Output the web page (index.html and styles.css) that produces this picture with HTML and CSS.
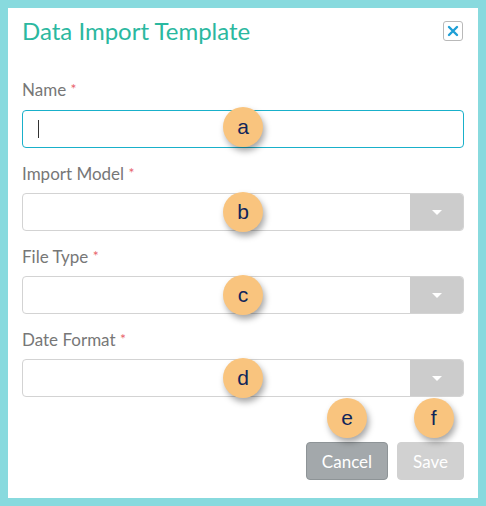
FILE: index.html
```html
<!DOCTYPE html>
<html>
<head>
<meta charset="utf-8">
<link rel="stylesheet" href="styles.css">
</head>
<body>
<div class="dialog">
  <div class="header">
    <h1 class="title">Data Import Template</h1>
    <button class="close" aria-label="Close">
      <svg width="12" height="12" viewBox="0 0 12 12"><path d="M2 2 L10 10 M10 2 L2 10" stroke="#1e9fd6" stroke-width="2.4" stroke-linecap="round"/></svg>
    </button>
  </div>

  <div class="field first">
    <label class="label">Name <span class="req">*</span></label>
    <div class="control">
      <div class="input focused"><span class="caret-line"></span></div>
      <span class="badge badge-up">a</span>
    </div>
  </div>

  <div class="field">
    <label class="label">Import Model <span class="req">*</span></label>
    <div class="control">
      <div class="select"><div class="select-value"></div><div class="select-btn"><span class="tri"></span></div></div>
      <span class="badge">b</span>
    </div>
  </div>

  <div class="field">
    <label class="label">File Type <span class="req">*</span></label>
    <div class="control">
      <div class="select"><div class="select-value"></div><div class="select-btn"><span class="tri"></span></div></div>
      <span class="badge">c</span>
    </div>
  </div>

  <div class="field">
    <label class="label">Date Format <span class="req">*</span></label>
    <div class="control">
      <div class="select"><div class="select-value"></div><div class="select-btn"><span class="tri"></span></div></div>
      <span class="badge">d</span>
    </div>
  </div>

  <div class="actions">
    <div class="btn-wrap">
      <button class="btn btn-cancel">Cancel</button>
      <span class="badge badge-btn">e</span>
    </div>
    <div class="btn-wrap">
      <button class="btn btn-save">Save</button>
      <span class="badge badge-btn badge-f">f</span>
    </div>
  </div>
</div>
</body>
</html>
```

FILE: styles.css
```css
html, body {
  margin: 0;
  padding: 0;
}
body {
  background: #88dade;
  width: 486px;
  height: 506px;
  font-family: Lato, "Liberation Sans", sans-serif;
  overflow: hidden;
}
.dialog {
  box-sizing: border-box;
  margin: 8px;
  width: 470px;
  height: 490px;
  background: #fff;
  padding: 9px 14px 0 14px;
}
.header {
  display: flex;
  justify-content: space-between;
  align-items: center;
  height: 28px;
}
.title {
  margin: 0;
  font-size: 24px;
  line-height: 28px;
  font-weight: 400;
  color: #2bb8a0;
}
.close {
  box-sizing: border-box;
  width: 20px;
  height: 20px;
  margin-right: 1px;
  padding: 0;
  border: 1px solid #b9b9b9;
  border-radius: 3px;
  background: #fff;
  display: flex;
  align-items: center;
  justify-content: center;
}
.field {
  margin-top: 16px;
}
.field.first {
  margin-top: 35px;
}
.label {
  display: block;
  height: 20px;
  font-size: 17px;
  line-height: 20px;
  color: #777;
  margin-bottom: 9px;
}
.field.first .label {
  margin-bottom: 10px;
}
.req {
  color: #e8646c;
  font-size: 14px;
  line-height: 1;
  position: relative;
  top: -2px;
}
.control {
  position: relative;
}
.input {
  box-sizing: border-box;
  height: 38px;
  border: 1px solid #cfcfcf;
  border-radius: 4px;
  display: flex;
  align-items: center;
  padding-left: 15px;
}
.input.focused {
  border-color: #19b0ca;
}
.caret-line {
  display: block;
  width: 1px;
  height: 18px;
  background: #333;
}
.select {
  box-sizing: border-box;
  height: 38px;
  border: 1px solid #d3d3d3;
  border-radius: 4px;
  display: flex;
  overflow: hidden;
}
.select-value {
  flex: 1;
}
.select-btn {
  width: 53px;
  background: #cccccc;
  display: flex;
  align-items: center;
  justify-content: center;
}
.tri {
  width: 0;
  height: 0;
  border-left: 5px solid transparent;
  border-right: 5px solid transparent;
  border-top: 5px solid #fff;
}
.badge {
  position: absolute;
  left: 50%;
  top: 50%;
  width: 40px;
  height: 40px;
  margin-left: -20px;
  margin-top: -20px;
  border-radius: 50%;
  background: #f9c47e;
  box-shadow: 2px 4px 6px rgba(0, 0, 0, 0.35);
  color: #10255a;
  font-family: "Liberation Sans", Arial, sans-serif;
  font-size: 21px;
  line-height: 40px;
  text-align: center;
}
.badge-up {
  margin-top: -22px;
}
.actions {
  display: flex;
  justify-content: flex-end;
  gap: 9px;
  margin-top: 45px;
}
.btn-wrap {
  position: relative;
}
.btn {
  box-sizing: border-box;
  height: 38px;
  padding: 0 15px;
  border-radius: 4px;
  font-family: Lato, "Liberation Sans", sans-serif;
  font-size: 17px;
  color: #fff;
  display: block;
}
.btn-cancel {
  background: #a3a8ab;
  border: 1px solid #8e9497;
}
.btn-save {
  background: #d1d1d1;
  border: 1px solid #d1d1d1;
}
.badge-btn {
  top: -24px;
  margin-top: -20px;
}
.badge-f {
  margin-left: -17px;
}
```
